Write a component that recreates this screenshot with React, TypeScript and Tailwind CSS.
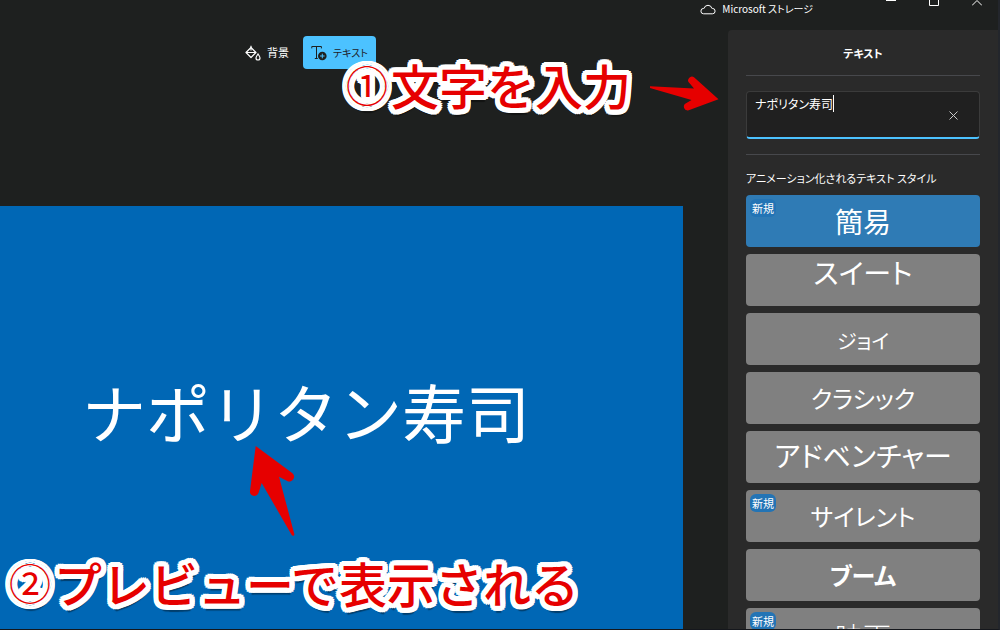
import React, { useState } from "react";

interface TextStyle {
  name: string;
  isNew?: boolean;
  className: string;
}

const textStyles: TextStyle[] = [
  { name: "簡易", isNew: true, className: "text-[28px]" },
  { name: "スイート", className: "text-[28px] pb-4" },
  { name: "ジョイ", className: "text-xl pt-1" },
  { name: "クラシック", className: "text-2xl" },
  { name: "アドベンチャー", className: "text-[28px] pb-1" },
  { name: "サイレント", isNew: true, className: "text-2xl" },
  { name: "ブーム", className: "text-2xl font-bold" },
  { name: "映画", isNew: true, className: "text-[28px] font-light pt-1" },
];

const CloudIcon = () => (
  <svg width="16" height="12" viewBox="0 0 16 12" fill="none" stroke="currentColor">
    <path d="M3.600 10.800h8.800a2.700 2.700 0 0 0 0-5.400h-.5a4 4 0 0 0-7.800 0h-.5a2.700 2.700 0 0 0 0 5.400z" />
  </svg>
);

const BucketIcon = () => (
  <svg width="16" height="16" viewBox="0 0 16 16" fill="none" stroke="currentColor" strokeWidth="1.200">
    <path d="M6 2.500 11 7.500 6 12.500 1 7.500z" strokeLinejoin="round" />
    <path d="M1.200 7.500h9.600M6 5.500V.8" />
    <path d="M13 9c1 1.600 2 2.700 2 4a2 2 0 0 1-4 0c0-1.300 1-2.400 2-4z" />
  </svg>
);

const AddTextIcon = () => (
  <svg width="16" height="16" viewBox="0 0 16 16" fill="none" stroke="currentColor">
    <path d="M.8 3.400V1.500h9.600v1.900M5.500 1.500v12M3.800 13.500h3" />
    <circle cx="11.300" cy="11" r="4.300" fill="currentColor" stroke="none" />
    <path d="M11.300 8.700v4.600M9 11h4.600" stroke="#4cc2ff" />
  </svg>
);

const TitleBar = () => (
  <header className="flex h-[30px] shrink-0 justify-end">
    <div className="flex h-[17px] flex-1 items-center justify-end gap-1.5 text-[10px] [font-feature-settings:'palt']">
      <CloudIcon />
      <span>Microsoft ストレージ</span>
    </div>
    <div className="ml-[63px] flex h-2 items-end gap-[13px] pr-1.5">
      <button aria-label="最小化" className="flex h-2 w-[30px] justify-center">
        <svg width="10" height="2" viewBox="0 0 10 2" fill="none" stroke="currentColor">
          <path d="M0 .5h10" />
        </svg>
      </button>
      <button aria-label="最大化" className="flex h-2 w-[30px] justify-center">
        <svg width="10" height="6" viewBox="0 0 10 6" fill="none" stroke="currentColor">
          <path d="M.5 0v5.500h9V0" />
        </svg>
      </button>
      <button aria-label="閉じる" className="flex h-2 w-[30px] justify-center">
        <svg width="10" height="6" viewBox="0 0 10 6" fill="none" stroke="currentColor">
          <path d="M0 5.500 5 .5l5 5" />
        </svg>
      </button>
    </div>
  </header>
);

const StyleButton = ({ style, selected, onSelect }: { style: TextStyle; selected: boolean; onSelect: () => void }) => (
  <button
    onClick={onSelect}
    className={`relative h-[52px] w-full shrink-0 rounded ${selected ? "bg-[#2f7bb5]" : "bg-[#808080]"}`}
  >
    <span className={`flex h-full items-center justify-center leading-none ${style.className}`}>
      {style.name}
    </span>
    {style.isNew && (
      <span className="absolute top-1 left-1 flex h-[18px] items-center rounded-md bg-[#2374b5] px-0.5 text-[11px] leading-none">
        新規
      </span>
    )}
  </button>
);

// The ring of shadows gives the letters a rounded white outline
const Callout = ({ step, children, className }: { step: string; children: string; className: string }) => (
  <p
    className={`absolute flex items-center text-5xl leading-[72px] font-medium whitespace-nowrap text-[#e60000] [text-shadow:5px_0_white,5px_2px_white,4px_4px_white,2px_5px_white,0_5px_white,-2px_5px_white,-4px_4px_white,-5px_2px_white,-5px_0_white,-5px_-2px_white,-4px_-4px_white,-2px_-5px_white,0_-5px_white,2px_-5px_white,4px_-4px_white,5px_-2px_white,0_3px_white,3px_0_white,0_-3px_white,-3px_0_white,1px_7px_1px_#0006] ${className}`}
  >
    <span className="w-12 text-center text-[42px] font-normal">{step}</span>
    {children}
  </p>
);

const App = () => {
  const [text, setText] = useState("ナポリタン寿司");
  const [selected, setSelected] = useState("簡易");

  return (
    <div className="relative flex h-screen flex-col overflow-hidden border-r-2 border-b border-r-[#23262c] border-b-[#15171c] bg-[#1e201f] font-['Noto_Sans_CJK_JP',sans-serif] text-white">
      <TitleBar />

      <div className="flex min-h-0 flex-1">
        <main className="flex min-w-0 flex-1 flex-col pt-1.5 pr-[45px]">
          <div className="flex gap-1.5 pl-[237px] [font-feature-settings:'palt']">
            <button className="flex h-[33px] items-center gap-1.5 rounded px-2 text-[11px]">
              <BucketIcon />
              背景
            </button>
            <button className="flex h-[33px] items-center gap-1.5 rounded bg-[#4cc2ff] px-2 text-[10px] text-[#1e201f]">
              <AddTextIcon />
              テキスト
            </button>
          </div>
          <section className="mt-[137px] min-h-0 flex-1 bg-[#0067b5] pt-[164px] pl-[82px]">
            <p className="text-[64px] leading-[80px] whitespace-nowrap">{text}</p>
          </section>
        </main>

        <aside className="flex w-[270px] shrink-0 flex-col rounded-tl bg-[#2a2a2a] px-[18px] [font-feature-settings:'palt']">
          <h2 className="h-[46px] shrink-0 border-b border-[#47484c] text-center text-[11px] leading-[46px] font-bold">
            テキスト
          </h2>
          <div className="relative mt-[15px] h-12 shrink-0">
            <textarea
              aria-label="テキスト"
              value={text}
              onChange={(e) => setText(e.target.value)}
              className="h-full w-full resize-none rounded border border-b-2 border-[#3b3b3b] border-b-[#4cc2ff] bg-[#202020] py-0.5 pr-10 pl-2 text-xs leading-5 outline-none"
            />
            <span className="absolute top-1 left-[87px] h-[17px] w-px bg-white" />
            <button
              aria-label="クリア"
              onClick={() => setText("")}
              className="absolute top-5 right-[22px] text-[#c8c8c8]"
            >
              <svg width="9" height="9" viewBox="0 0 9 9" stroke="currentColor">
                <path d="m.5.5 8 8M8.500.5l-8 8" />
              </svg>
            </button>
          </div>
          <hr className="mt-[15px] shrink-0 border-[#47484c]" />
          <h3 className="mt-3 h-7 shrink-0 text-[11px] leading-[22px]">アニメーション化されるテキスト スタイル</h3>
          <div className="flex flex-col gap-[7px]">
            {textStyles.map((style) => (
              <StyleButton
                key={style.name}
                style={style}
                selected={style.name === selected}
                onSelect={() => setSelected(style.name)}
              />
            ))}
          </div>
        </aside>
      </div>

      {/* Step callouts */}
      <Callout step="①" className="top-12 left-[343px]">
        文字を入力
      </Callout>
      <svg className="absolute top-[75px] left-[648px]" width="72" height="38" viewBox="0 0 72 38" fill="#e60000">
        <path d="M2 11.200 46 13.500 41.600 8.300a3.700 3.700 0 0 1 4.700-5.800L70.500 24.200 40 35.400a3.700 3.700 0 0 1-2.400-6.800L43.500 25 2 13z" />
      </svg>
      <Callout step="②" className="top-[546px] left-1.5">
        プレビューで表示される
      </Callout>
      <svg className="absolute top-[444px] left-[248px]" width="48" height="94" viewBox="0 0 48 94" fill="#e60000">
        <path d="M7.700 2 43.500 28.500a4.400 4.400 0 0 1-4.300 8.400L31 32.700 46.300 90a1.400 1.400 0 0 1-2.600 1L13.700 39 10.500 49a4.400 4.400 0 0 1-8.500-2z" />
      </svg>
    </div>
  );
};

export default App;
